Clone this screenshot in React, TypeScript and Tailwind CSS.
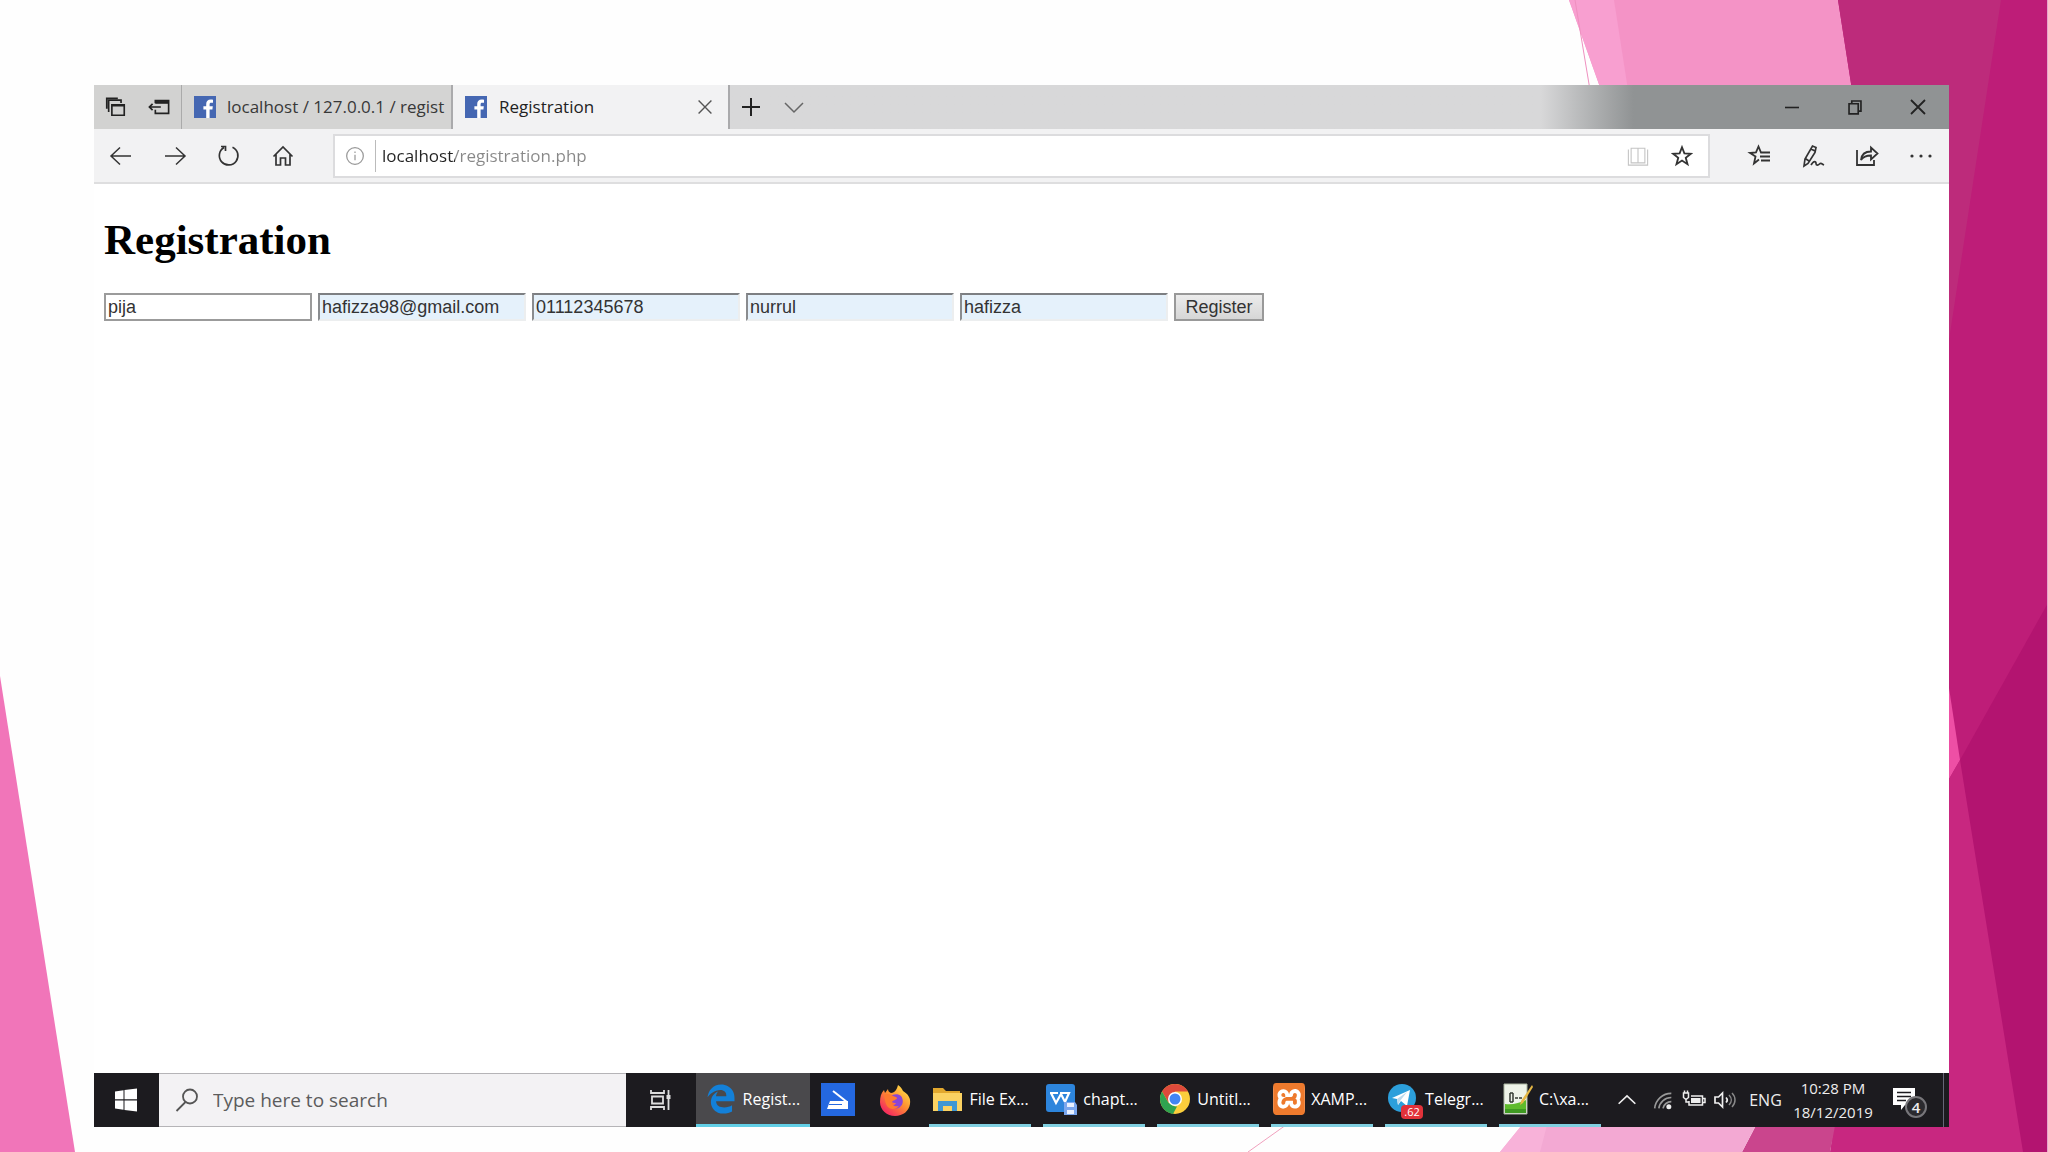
import React, { useState } from 'react';
import { FaEdgeLegacy } from 'react-icons/fa6';
import { SiXampp } from 'react-icons/si';

interface IconProps {
  className?: string;
  children: React.ReactNode;
}

const Icon: React.FC<IconProps> = ({ className = 'size-6', children }) => (
  <svg
    viewBox="0 0 24 24"
    fill="none"
    stroke="currentColor"
    strokeWidth={1.5}
    aria-hidden="true"
    className={`shrink-0 ${className}`}
  >
    {children}
  </svg>
);

const FacebookIcon = () => (
  <svg viewBox="0 0 22 22" aria-hidden="true" className="size-[22px] shrink-0">
    <rect width="22" height="22" fill="#4567b2" />
    <path d="M12.2 22v-8.4H9.4v-3.3h2.8V8.1c0-3 1.8-4.5 4.4-4.5 1.2 0 2.1.1 2.4.2v2.9h-1.7c-1.4 0-1.7.7-1.7 1.7v1.9h3.2l-.4 3.3h-2.8V22z" fill="#fff" />
  </svg>
);

const Backdrop = () => (
  <svg
    viewBox="0 0 2048 1152"
    preserveAspectRatio="none"
    aria-hidden="true"
    className="absolute inset-0 size-full"
  >
    <path d="M0 676L75 1152H0z" fill="#f175b9" />
    <path d="M1569 0H1860V90H1601z" fill="#f493c6" />
    <path d="M1569 0H1614L1628 90H1601z" fill="#f89fd0" />
    <path d="M1575 0L1590 90" stroke="#ee8fbf" fill="none" />
    <path d="M1838 0H2048V1152H1940V700L1852 90z" fill="#be1d78" />
    <path d="M1838 0H2001L1949 340V90H1852z" fill="#bd2b7b" />
    <path d="M2048 603L1960 760L1940 1152H2048z" fill="#b31470" />
    <path d="M1949 688L1960 760L1945 786z" fill="#ee4fa5" />
    <path d="M1960 760L2023 1152H1830L1836 1110H1945V786z" fill="#c82780" />
    <path d="M1764 1110H1838L1830 1152H1742z" fill="#ca458d" />
    <path d="M1534 1110H1764L1742 1152H1500z" fill="#f3a9d3" />
    <path d="M1534 1110H1551L1540 1152H1500z" fill="#f8b2d9" />
    <path d="M1307 1110L1248 1152" stroke="#f0a0bd" fill="none" />
    <path d="M2047 0H2048V1152H2047z" fill="#e6a5cb" />
  </svg>
);

const TabStrip = () => (
  <div className="flex h-11 shrink-0 bg-linear-to-r from-[#d8d8d9] from-78% to-[#909394] to-83% text-[#222]">
    <div className="flex w-[88px] items-center justify-around border-r border-[#aaa] bg-[#d2d2d1]">
      <button aria-label="Tabs you've set aside">
        <Icon className="size-[22px]">
          <path d="M7.500 9.500H21V21H7.500zM4 17.500V4.500h13.500v3" strokeWidth={1.800} />
          <path d="M7.500 10.500H21M2 14V2.500h12" strokeWidth={2} />
        </Icon>
      </button>
      <button aria-label="Set these tabs aside">
        <Icon className="size-[22px]">
          <path d="M8 8V5h14.500v14H8v-4M1.500 12H14M5 8.500L1.500 12 5 15.500" strokeWidth={1.800} />
          <path d="M8 7h14.500" strokeWidth={3} />
        </Icon>
      </button>
    </div>
    <button className="flex w-[271px] items-center gap-[11px] overflow-hidden border-r-2 border-[#aaaaac] bg-[#d4d4d3] pl-3 text-[17px] whitespace-nowrap text-[#383838]">
      <FacebookIcon />
      localhost / 127.0.0.1 / regist
    </button>
    <div className="flex w-[275px] items-center gap-3 bg-[#f2f2f3] px-3 text-[17px]">
      <FacebookIcon />
      <span>Registration</span>
      <button aria-label="Close tab" className="ml-auto text-[#555]">
        <Icon className="size-[22px]">
          <path d="M5 5l14 14M19 5L5 19" />
        </Icon>
      </button>
    </div>
    <button aria-label="New tab" className="flex w-11 items-center justify-center border-l-2 border-[#aaaaac]">
      <Icon>
        <path d="M3 12h18M12 3v18" strokeWidth={2} />
      </Icon>
    </button>
    <button aria-label="Show tab previews" className="flex w-11 items-center justify-center text-[#666]">
      <Icon>
        <path d="M3 8l9 9 9-9" />
      </Icon>
    </button>
    <div className="ml-auto flex">
      <button aria-label="Minimize" className="flex w-[63px] items-center justify-center">
        <Icon>
          <path d="M5 12.500h14" strokeWidth={1.600} />
        </Icon>
      </button>
      <button aria-label="Restore" className="flex w-[63px] items-center justify-center">
        <Icon className="size-[22px]">
          <path d="M5.500 8.500h10v11h-10zM8.500 8V5.500h10v11H16" strokeWidth={1.800} />
        </Icon>
      </button>
      <button aria-label="Close" className="flex w-[63px] items-center justify-center">
        <Icon>
          <path d="M5 5l14 14M19 5L5 19" strokeWidth={1.800} />
        </Icon>
      </button>
    </div>
  </div>
);

const AddressBar = () => {
  const [url, setUrl] = useState('localhost/registration.php');

  return (
    <div className="flex h-[55px] shrink-0 items-center border-b-2 border-[#dededf] bg-[#f2f2f3] text-[#333]">
      <div className="flex w-[239px]">
        <button aria-label="Back" className="flex w-[54px] justify-center">
          <Icon><path d="M2 12h20M11 3.500L2 12l9 8.500" /></Icon>
        </button>
        <button aria-label="Forward" className="flex w-[54px] justify-center">
          <Icon><path d="M2 12h20M13 3.500l9 8.500-9 8.500" /></Icon>
        </button>
        <button aria-label="Refresh" className="flex w-[54px] justify-center">
          <Icon><path d="M15.500 3.200a9.300 9.300 0 1 1-8.500.4M4 2.500h4.500V7" strokeWidth={1.700} /></Icon>
        </button>
        <button aria-label="Home" className="flex w-[54px] justify-center">
          <Icon><path d="M2.500 12.500L12 3l9.500 9.500M5 10.500V21h4.500v-7h5v7H19V10.500" strokeWidth={1.700} /></Icon>
        </button>
      </div>
      <div className="flex h-11 grow items-center border-2 border-[#dcdcde] bg-white">
        <button aria-label="Site information" className="flex w-10 justify-center text-[#999]">
          <Icon className="size-5">
            <circle cx="12" cy="12" r="10" />
            <path d="M12 10.500V17M12 6.500v2" />
          </Icon>
        </button>
        <input
          type="text"
          aria-label="Address"
          value={url}
          onChange={event => setUrl(event.target.value)}
          className="h-8 min-w-0 grow border-l border-[#bbb] bg-linear-to-r from-[#222] from-[79px] to-[#888] to-[79px] bg-clip-text px-[6px] text-[17px] text-transparent outline-none"
        />
        <button aria-label="Reading view" className="flex w-11 justify-center text-[#c4c4c4]">
          <Icon className="size-[22px]"><path d="M4.500 3.500h15v16h-15zM12 4v16M1.500 5v17h21V5" strokeWidth={1.200} /></Icon>
        </button>
        <button aria-label="Add to favorites" className="mr-1 flex w-11 justify-center">
          <Icon className="size-[22px]"><path d="M12 2.500l2.600 6.700 7 .4-5.500 4.400 1.900 7-6-4-6 4 1.900-7L2.400 9.600l7-.4z" strokeWidth={2} /></Icon>
        </button>
      </div>
      <div className="flex w-[239px] justify-end pr-[1px]">
        <button aria-label="Favorites" className="flex w-[54px] justify-center">
          <Icon><path d="M12 15.500l-5 4 1.500-7L3 9l6-.6L11.500 2.500 14 8.500h9M13 12.500h10M14 16.500h9" strokeWidth={1.800} /></Icon>
        </button>
        <button aria-label="Add notes" className="flex w-[54px] justify-center">
          <Icon><path d="M3 22l1-7L11.500 2l3.500 1.500-1 5-7 11zM5 15l3 2M10 5l4 2M10 21c3-5 5-3.500 5-1.500s2 2 3.500.5 2.500 0 4.500 1" strokeWidth={1.700} /></Icon>
        </button>
        <button aria-label="Share" className="flex w-[54px] justify-center">
          <Icon><path d="M2 6v15h17v-5M6 16c.5-5 4-8.500 10-8.500V3.500l6.500 6-6.500 6v-4c-5 0-8 1.500-10 4.500z" strokeWidth={1.800} /></Icon>
        </button>
        <button aria-label="Settings and more" className="flex w-[54px] justify-center">
          <Icon>
            <g fill="currentColor" stroke="none">
              <circle cx="3" cy="12" r="1.600" />
              <circle cx="12" cy="12" r="1.600" />
              <circle cx="21" cy="12" r="1.600" />
            </g>
          </Icon>
        </button>
      </div>
    </div>
  );
};

const fields = [
  { name: 'username', label: 'Username', value: 'pija', autofilled: false },
  { name: 'email', label: 'Email', value: 'hafizza98@gmail.com', autofilled: true },
  { name: 'phone', label: 'Phone', value: '01112345678', autofilled: true },
  { name: 'firstname', label: 'First name', value: 'nurrul', autofilled: true },
  { name: 'lastname', label: 'Last name', value: 'hafizza', autofilled: true }
];

const RegistrationPage = () => (
  <main className="grow bg-white px-[10px] pt-8">
    <h1 className="font-['Liberation_Serif',serif] text-[43px] leading-[48px] font-bold text-black">
      Registration
    </h1>
    <form
      onSubmit={event => event.preventDefault()}
      className="mt-[29px] flex flex-wrap gap-[6px] font-['Liberation_Sans',sans-serif] text-lg leading-6 text-[#333]"
    >
      {fields.map(field => (
        <input
          key={field.name}
          name={field.name}
          aria-label={field.label}
          defaultValue={field.value}
          className={
            field.autofilled
              ? 'h-7 w-[208px] border-2 border-t-[#7d7f82] border-r-[#eceeef] border-b-[#eceeef] border-l-[#8a8c8f] bg-[#e5f1fb] px-[2px] outline-none'
              : 'h-7 w-[208px] border-2 border-[#9b9b9b] bg-white px-[2px] outline-none'
          }
        />
      ))}
      <button className="h-7 w-[90px] border-2 border-[#999] bg-linear-to-b from-[#ececec] to-[#d6d6d6]">
        Register
      </button>
    </form>
  </main>
);

const ScanIcon = () => (
  <svg viewBox="0 0 34 34" aria-hidden="true" className="size-[34px]">
    <rect width="34" height="33" fill="#2468e0" />
    <path d="M12 8l14 11" stroke="#fff" strokeWidth="2" />
    <path d="M9 18h18v8H6z" fill="#fff" />
    <path d="M8 21.500h13" stroke="#2468e0" strokeWidth="1" />
  </svg>
);

const FirefoxIcon = () => (
  <svg viewBox="0 0 32 32" aria-hidden="true" className="size-8">
    <defs>
      <linearGradient id="flame" x1="1" y1="0" x2="0.200" y2="1">
        <stop offset="0.100" stopColor="#ffe14a" />
        <stop offset="0.500" stopColor="#ff9130" />
        <stop offset="0.900" stopColor="#f5325b" />
      </linearGradient>
    </defs>
    <path d="M19 1c3 2 4 4 5 6 5 3 8 7 7 13-1 7-7 12-15 12S1 26 1 18c0-5 1-9 4-12l1 3 3-4c0 2 1 3 3 4 4 0 6-4 7-8z" fill="url(#flame)" />
    <path d="M11 13c2-3 8-4 11-1 3 4 2 9-1 11-4 3-9 1-10-2 3 1 5 0 6-2-4 0-6-2-6-6z" fill="#8a45d6" />
    <path d="M5 11c3-2 7-1 9 1 2 1 4 1 4 2 0 2-4 2-5 4-1 3 3 5 7 4-3 4-9 4-12 0-2-3-2-7-3-11z" fill="#ff7a2f" />
  </svg>
);

const FolderIcon = () => (
  <svg viewBox="0 0 32 32" aria-hidden="true" className="size-8">
    <path d="M2 5h10l3 3h14v20H2z" fill="#e2a82e" />
    <path d="M2 10h29v18H2z" fill="#fbd262" />
    <path d="M7 28V18h19v10h-5v-5h-9v5z" fill="#3f97d3" />
  </svg>
);

const WpsIcon = () => (
  <svg viewBox="0 0 32 32" aria-hidden="true" className="size-8">
    <rect x="1" y="1" width="29" height="28" rx="3" fill="#2d85dc" />
    <path d="M5 10h8M6 10l5 10 5-9 4 8 4-9h-9" fill="none" stroke="#fff" strokeWidth="2.200" />
    <path d="M19 19h11l2 3v10H19z" fill="#7ba7ee" />
    <path d="M22 20h7v4h-7zM22 27h7v4h-7z" fill="#e9f1ff" />
  </svg>
);

const ChromeIcon = () => (
  <svg viewBox="0 0 32 32" aria-hidden="true" className="size-8">
    <circle cx="16" cy="16" r="15" fill="#fbce3c" />
    <path d="M3 8.500A15 15 0 0 1 29 8.500H16l-6.500 11z" fill="#de4a3b" />
    <path d="M3 8.500l6.500 11.300L16 23.500l2 0-4 7.400A15 15 0 0 1 3 8.500z" fill="#2fa350" />
    <circle cx="16" cy="16" r="7" fill="#fff" />
    <circle cx="16" cy="16" r="5.500" fill="#4285f4" />
  </svg>
);

const TelegramIcon = () => (
  <span className="relative block">
    <svg viewBox="0 0 32 32" aria-hidden="true" className="size-8">
      <circle cx="15" cy="15" r="14" fill="#2c9fdb" />
      <path d="M5 15l18-8-3 16-6-5-3 4-1-6z" fill="#fff" />
      <path d="M10 16l10-7-7 9-2 4z" fill="#bcd9ec" />
    </svg>
    <span className="absolute -right-1 -bottom-1 flex h-[14px] w-[22px] items-center justify-center rounded-sm bg-[#e2323a] text-[11px] leading-none text-white">
      .62
    </span>
  </span>
);

const NotepadIcon = () => (
  <svg viewBox="0 0 32 32" aria-hidden="true" className="size-8">
    <path d="M3 1h23v30H3z" fill="#eef3e8" stroke="#a9b5a0" />
    <path d="M4 21c8 1 14-1 21-4v13H4z" fill="#5fbb2c" />
    <path d="M4 26h21v4H4z" fill="#3f9a22" />
    <path d="M9 10v9M12 10v9M14 15h3M18 15h3M9 10h3M9 19h3" stroke="#363d33" strokeWidth="1.500" fill="none" />
    <path d="M31 2L20 18l-1 4 3-2L32 4z" fill="#e6b845" />
  </svg>
);

const openApps = [
  { title: 'File Ex...', icon: <FolderIcon /> },
  { title: 'chapt...', icon: <WpsIcon /> },
  { title: 'Untitl...', icon: <ChromeIcon /> },
  {
    title: 'XAMP...',
    icon: (
      <span className="block size-8 rounded-md bg-white">
        <SiXampp className="size-8 text-[#ee7a2d]" />
      </span>
    )
  },
  { title: 'Telegr...', icon: <TelegramIcon /> },
  { title: 'C:\\xa...', icon: <NotepadIcon /> }
];

const Taskbar = () => (
  <footer className="flex h-[54px] shrink-0 bg-[#1c1b1f] text-white">
    <button aria-label="Start" className="flex w-[65px] items-center justify-center">
      <svg viewBox="0 0 24 24" fill="#fff" aria-hidden="true" className="size-6">
        <path d="M1 3.500l8.500-1.300v9.100H1zM10.500 2L23 .5v10.800H10.500zM1 12.500h8.500v9.200L1 20.500zM10.500 12.500H23v11L10.500 22z" />
      </svg>
    </button>
    <label className="flex w-[467px] items-center gap-[14px] border-y border-[#b5b4b7] bg-[#f3f2f4] pl-4 text-[#555]">
      <Icon>
        <circle cx="15" cy="8.500" r="7" strokeWidth={1.800} />
        <path d="M10.500 14L1.500 23" strokeWidth={1.800} />
      </Icon>
      <input
        type="search"
        aria-label="Search"
        placeholder="Type here to search"
        className="min-w-0 grow bg-transparent text-[19px] outline-none placeholder:text-[#5c5c5c]"
      />
    </label>
    <button aria-label="Task View" className="flex w-[70px] items-center justify-center pr-1 text-[#ddd]">
      <Icon>
        <path d="M4 2v3h13V2M5 8.500h11v7H5zM4 22v-3h13v3M21.500 2v20" strokeWidth={1.800} />
        <path d="M19.500 7h4v4h-4z" fill="currentColor" stroke="none" />
      </Icon>
    </button>
    <button className="flex w-[114px] items-center gap-[6px] border-b-3 border-[#62cfe6] bg-[#4a494c] pl-[9px] text-base whitespace-nowrap">
      <FaEdgeLegacy aria-hidden="true" className="size-8 shrink-0 p-[1px] text-[#1380d8]" />
      Regist...
    </button>
    <button aria-label="Scan" className="flex w-[57px] items-center justify-center">
      <ScanIcon />
    </button>
    <button aria-label="Firefox" className="flex w-[57px] items-center justify-center">
      <FirefoxIcon />
    </button>
    {openApps.map(app => (
      <button
        key={app.title}
        className="mx-[6px] flex w-[102px] items-center gap-[6px] border-b-3 border-[#80cfe0] pl-[2px] text-base whitespace-nowrap"
      >
        {app.icon}
        {app.title}
      </button>
    ))}
    <div className="ml-auto flex items-center text-[15px] leading-6 text-[#eee]">
      <button aria-label="Show hidden icons" className="flex w-10 justify-center">
        <Icon className="size-5"><path d="M2 16.500L12 7l10 9.500" strokeWidth={2} /></Icon>
      </button>
      <button aria-label="Network" className="flex w-[31px] justify-center">
        <Icon className="size-5">
          <path d="M2 22A20 20 0 0 1 22 4M7 22A15 15 0 0 1 22 9M12 22a10 10 0 0 1 10-8" stroke="#999" strokeWidth={2} />
          <circle cx="19" cy="20" r="3" fill="currentColor" stroke="none" />
        </Icon>
      </button>
      <button aria-label="Battery" className="flex w-[31px] justify-center">
        <Icon>
          <path d="M9 8h11.500v9H7v-4M21 10.500h2v4h-2M1.500 5h5v4.500l-2.500 2-2.500-2zM2.500 5V2.500M5.500 5V2.500M4 11.500V14h3" />
          <path d="M9 10h9.500v5H9z" fill="currentColor" stroke="none" />
        </Icon>
      </button>
      <button aria-label="Volume" className="flex w-[31px] justify-center">
        <Icon>
          <path d="M2 9h3.500l4-4v14l-4-4H2zM13 9.500c1.500 1.500 1.500 3.500 0 5" strokeWidth={1.700} />
          <path d="M16 7c3 3 3 7 0 10M19 5c4 4 4 10 0 14" stroke="#888" />
        </Icon>
      </button>
      <button className="w-[51px] text-base">ENG</button>
      <button className="w-[88px] pr-1 text-center">
        10:28 PM
        <br />
        18/12/2019
      </button>
      <button aria-label="Notifications" className="flex w-16 justify-center pr-1">
        <span className="relative block">
          <svg viewBox="0 0 32 32" aria-hidden="true" className="size-8">
            <path d="M0 4h22v17H12l-4 5v-5H0z" fill="#fff" />
            <path d="M4 8.500h14M4 12.500h14M4 16.500h9" stroke="#1c1b1f" strokeWidth="1.500" />
          </svg>
          <span className="absolute -right-[2px] -bottom-[2px] flex size-[22px] items-center justify-center rounded-full border-2 border-[#77767a] bg-[#2b2a2e] text-[15px] leading-none font-semibold">
            4
          </span>
        </span>
      </button>
      <button aria-label="Show desktop" className="h-[54px] w-[6px] border-l border-[#667]" />
    </div>
  </footer>
);

export default function App() {
  return (
    <div className="relative flex min-h-screen bg-[#fefefe] pt-[85px] pr-[99px] pb-[25px] pl-[94px] font-['Open_Sans',sans-serif]">
      <Backdrop />
      <div className="relative flex min-w-0 grow flex-col bg-white">
        <TabStrip />
        <AddressBar />
        <RegistrationPage />
        <Taskbar />
      </div>
    </div>
  );
}
